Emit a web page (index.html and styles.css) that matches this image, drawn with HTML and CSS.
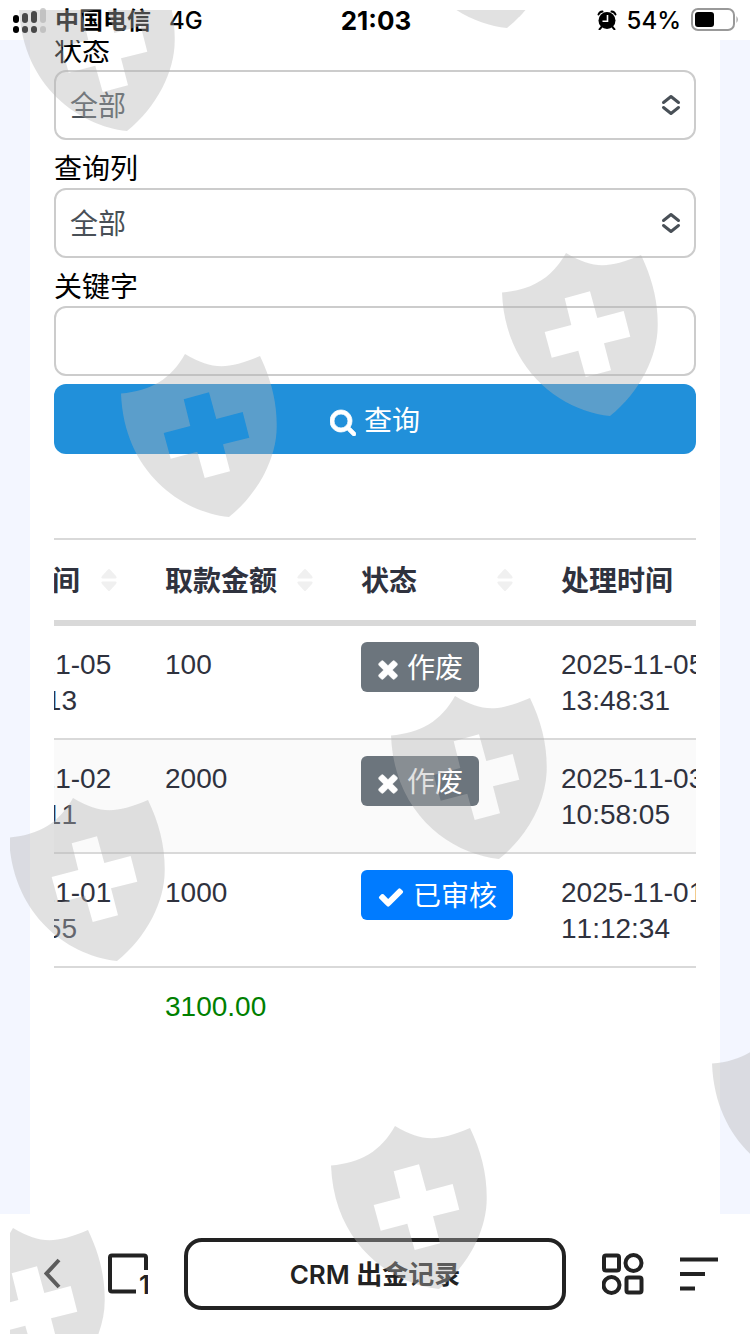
FILE: index.html
```html
<!DOCTYPE html>
<html lang="zh-CN">
<head>
    <meta charset="UTF-8">
    <meta name="viewport" content="width=device-width, initial-scale=1.0">
    <title>CRM 出金记录</title>
    <link rel="stylesheet" href="styles.css">
</head>
<body>
    <!-- shared icons -->
    <svg class="sprite" aria-hidden="true">
        <symbol id="icon-times" viewBox="192 0 1408 1792">
            <path d="M1490 1322q0 40-28 68l-136 136q-28 28-68 28t-68-28l-294-294-294 294q-28 28-68 28t-68-28l-136-136q-28-28-28-68t28-68l294-294-294-294q-28-28-28-68t28-68l136-136q28-28 68-28t68 28l294 294 294-294q28-28 68-28t68 28l136 136q28 28 28 68t-28 68l-294 294 294 294q28 28 28 68z" stroke="#fff" stroke-width="50"/>
        </symbol>
        <symbol id="icon-sort" viewBox="0 0 16 22">
            <path d="M7 .6Q8 -.4 9 .6L15 7Q16.500 9.500 14.500 9.500H1.500Q-.5 9.500 1 7zM7 21.400Q8 22.400 9 21.400L15 15Q16.500 12.500 14.500 12.500H1.500Q-.5 12.500 1 15z"/>
        </symbol>
        <symbol id="icon-updown" viewBox="0 0 20 22">
            <path d="M2.500 8.500L10 2.500L17.500 8.500M2.500 13.500L10 19.500L17.500 13.500" fill="none" stroke="currentColor" stroke-width="3" stroke-linecap="round" stroke-linejoin="round"/>
        </symbol>
        <symbol id="shield" viewBox="0 0 156 164">
            <path fill-rule="evenodd" d="M0 39.500C30 37 50 25 64 0C92 16 105 16 139 2C150 25 156 48 155.700 72C156 103 138 139 108 163C60 158 3 118 0 39.500zM62.700 45.300L69.300 72L42.700 79L49.700 104.700L76.300 97.700L83.700 124L109 117.300L102 90.300L128.300 83.700L121.700 58L95.300 65L88 38.300z"/>
        </symbol>
    </svg>

    <header class="status-bar">
        <div class="status-left">
            <svg class="signal" width="33" height="25" viewBox="0 0 33 25">
                <rect x="0" y="7" width="6" height="8" rx="3"/>
                <rect x="9" y="5" width="6" height="10" rx="3"/>
                <rect x="18" y="3" width="6" height="12" rx="3"/>
                <rect x="27" y="0" width="6" height="15" rx="3" opacity=".2"/>
                <rect x="0" y="18" width="6" height="7" rx="3"/>
                <rect x="9" y="18" width="6" height="7" rx="3"/>
                <rect x="18" y="18" width="6" height="7" rx="3"/>
                <rect x="27" y="18" width="6" height="7" rx="3" opacity=".2"/>
            </svg>
            <span class="carrier">中国电信</span>
            <span class="network">4G</span>
        </div>
        <span class="clock">21:03</span>
        <div class="status-right">
            <svg width="20" height="20" viewBox="0 0 20 20">
                <circle cx="10" cy="10.500" r="8.500"/>
                <path d="M1.500 4.500Q2.500 1.800 5.500 1.500M14.500 1.500Q17.500 1.800 18.500 4.500M4.500 17L2.500 19.300M15.500 17L17.500 19.300" fill="none" stroke="#000" stroke-width="2" stroke-linecap="round"/>
                <path d="M10.500 5V11.300H5.500" fill="none" stroke="#fff" stroke-width="1.600"/>
            </svg>
            <span class="percent">54%</span>
            <svg width="48" height="24" viewBox="0 0 48 24">
                <rect x="1" y="1" width="42" height="21" rx="6" fill="none" stroke="#999" stroke-width="2"/>
                <rect x="4" y="4" width="19" height="15" rx="3"/>
                <path d="M45.500 8Q48 11.500 45.500 15z" fill="#999"/>
            </svg>
        </div>
    </header>

    <main class="page">
        <div class="card">
            <form class="search-form">
                <label for="status">状态</label>
                <div class="select-box">
                    <select id="status"><option>全部</option><option>作废</option><option>已审核</option></select>
                    <svg class="select-arrow"><use href="#icon-updown"/></svg>
                </div>
                <label for="column">查询列</label>
                <div class="select-box">
                    <select id="column"><option>全部</option></select>
                    <svg class="select-arrow"><use href="#icon-updown"/></svg>
                </div>
                <label for="keyword">关键字</label>
                <input type="text" id="keyword">
                <button type="button" class="btn-search">
                    <svg width="26" height="34" viewBox="64 -384 1664 2176"><path stroke="#fff" stroke-width="50" d="M1216 832q0-185-131.500-316.500t-316.500-131.500-316.500 131.500-131.500 316.500 131.500 316.500 316.500 131.500 316.500-131.500 131.500-316.500zm512 832q0 52-38 90t-90 38q-54 0-90-38l-343-342q-179 124-399 124-143 0-273.500-55.500t-225-150-150-225-55.500-273.500 55.500-273.500 150-225 225-150 273.500-55.500 273.500 55.500 225 150 150 225 55.500 273.500q0 220-124 399l343 343q37 37 37 90z"/></svg>
                    查询
                </button>
            </form>

            <div class="table-wrap">
                <table class="records">
                    <colgroup>
                        <col class="col-apply"><col class="col-amount"><col class="col-status"><col class="col-handle">
                    </colgroup>
                    <thead>
                        <tr>
                            <th><div class="th-inner">申请时间<svg class="sort"><use href="#icon-sort"/></svg></div></th>
                            <th><div class="th-inner">取款金额<svg class="sort"><use href="#icon-sort"/></svg></div></th>
                            <th><div class="th-inner">状态<svg class="sort"><use href="#icon-sort"/></svg></div></th>
                            <th><div class="th-inner">处理时间<svg class="sort"><use href="#icon-sort"/></svg></div></th>
                        </tr>
                    </thead>
                    <tbody>
                        <tr>
                            <td>2025-11-05<br>13:20:13</td>
                            <td>100</td>
                            <td class="state"><span class="badge"><svg width="22" height="28"><use href="#icon-times"/></svg>作废</span></td>
                            <td>2025-11-05<br>13:48:31</td>
                        </tr>
                        <tr>
                            <td>2025-11-02<br>10:20:11</td>
                            <td>2000</td>
                            <td class="state"><span class="badge"><svg width="22" height="28"><use href="#icon-times"/></svg>作废</span></td>
                            <td>2025-11-03<br>10:58:05</td>
                        </tr>
                        <tr>
                            <td>2025-11-01<br>10:20:55</td>
                            <td>1000</td>
                            <td class="state"><span class="badge badge-done"><svg width="28" height="28" viewBox="0 0 1792 1792"><path d="M1671 566q0 40-28 68l-724 724-136 136q-28 28-68 28t-68-28l-136-136-362-362q-28-28-28-68t28-68l136-136q28-28 68-28t68 28l294 295 656-657q28-28 68-28t68 28l136 136q28 28 28 68z"/></svg>已审核</span></td>
                            <td>2025-11-01<br>11:12:34</td>
                        </tr>
                    </tbody>
                    <tfoot>
                        <tr>
                            <td></td>
                            <td class="total">3100.00</td>
                            <td></td>
                            <td></td>
                        </tr>
                    </tfoot>
                </table>
            </div>
        </div>
    </main>

    <nav class="toolbar">
        <button type="button" aria-label="返回">
            <svg width="28" height="42" viewBox="0 0 28 42"><path d="M15 7L2.500 20.500L15 34" fill="none" stroke="#222" stroke-width="4"/></svg>
        </button>
        <button type="button" aria-label="标签页">
            <svg width="40" height="42" viewBox="0 0 40 42">
                <path d="M28 38.500H4Q2 38.500 2 36.500V4.500Q2 2.500 4 2.500H36Q38 2.500 38 4.500V17" fill="none" stroke="#222" stroke-width="4"/>
                <text class="tab-count" x="31" y="41">1</text>
            </svg>
        </button>
        <button type="button" class="address">CRM 出金记录</button>
        <button type="button" aria-label="应用">
            <svg width="42" height="42" viewBox="0 0 42 42">
                <g fill="none" stroke="#222" stroke-width="4">
                    <rect x="2" y="2.500" width="15" height="15" rx="2"/>
                    <circle cx="31.500" cy="10" r="8"/>
                    <circle cx="9.500" cy="32" r="8"/>
                    <rect x="24.500" y="24.500" width="15" height="15" rx="2"/>
                </g>
            </svg>
        </button>
        <button type="button" aria-label="菜单">
            <svg width="38" height="42" viewBox="0 0 38 42"><path d="M0 6.500H38M0 21H25M0 35.500H15" fill="none" stroke="#222" stroke-width="4"/></svg>
        </button>
    </nav>

    <!-- shield watermark over the whole screen -->
    <svg class="watermark" aria-hidden="true">
        <g fill="#b3b3b3" fill-opacity=".4">
            <use href="#shield" x="9" y="-42" width="156" height="164"/>
            <use href="#shield" x="389" y="-145" width="156" height="164"/>
            <use href="#shield" x="492" y="243" width="156" height="164"/>
            <use href="#shield" x="111" y="344" width="156" height="164"/>
            <use href="#shield" x="381" y="686" width="156" height="164"/>
            <use href="#shield" x="-1" y="788" width="156" height="164"/>
            <use href="#shield" x="702" y="1014" width="156" height="164"/>
            <use href="#shield" x="321" y="1116" width="156" height="164"/>
            <use href="#shield" x="-61" y="1218" width="156" height="164"/>
        </g>
    </svg>
</body>
</html>
```
FILE: styles.css
```css
* {
    box-sizing: border-box;
}

body {
    margin: 0;
    height: 100vh;
    display: flex;
    flex-direction: column;
    overflow: hidden;
    background-color: #fff;
    font-family: "Liberation Sans", "Noto Sans CJK SC", sans-serif;
    font-size: 28px;
    font-kerning: none;
    color: #2f323e;
}

button,
input,
select {
    font: inherit;
}

svg {
    display: block;
    flex: none;
}

.sprite {
    position: absolute;
    width: 0;
    height: 0;
}

/* status bar */
.status-bar {
    display: grid;
    grid-template-columns: 1fr auto 1fr;
    align-items: center;
    height: 40px;
    padding: 0 11px 0 13px;
    font-family: Inter, "Noto Sans CJK SC", sans-serif;
    font-size: 24px;
    font-weight: 500;
    line-height: 38px;
    color: #000;
    background-color: #fff;
    z-index: 1;
}

.status-bar span {
    padding-top: 2px;
}

.status-left,
.status-right {
    display: flex;
    align-items: center;
}

.status-right {
    justify-content: flex-end;
    gap: 10px;
}

.carrier {
    margin: 0 18px 0 9px;
    font-weight: 600;
}

.clock {
    font-size: 26px;
    font-weight: 700;
}

/* page */
.page {
    flex: 1;
    min-height: 0;
    overflow: hidden;
    padding: 0 30px;
    background-color: #f3f6ff;
}

.card {
    display: flow-root;
    min-height: 100%;
    padding: 0 24px;
    background-color: #fff;
}

.search-form {
    display: flex;
    flex-direction: column;
    margin-top: -10px;
    padding-bottom: 84px;
}

.search-form label {
    padding-top: 4px;
    line-height: 36px;
    color: #000;
}

.select-box {
    position: relative;
}

.search-form select,
.search-form input {
    display: block;
    width: 100%;
    height: 70px;
    margin-bottom: 8px;
    padding: 2px 14px 0;
    border: 2px solid #ccc;
    border-radius: 12px;
    background-color: #fff;
    color: #495057;
    appearance: none;
}

.select-arrow {
    position: absolute;
    top: 24px;
    right: 15px;
    width: 20px;
    height: 22px;
    color: #495057;
    pointer-events: none;
}

.btn-search {
    display: flex;
    justify-content: center;
    align-items: center;
    gap: 8px;
    height: 70px;
    border: none;
    border-radius: 12px;
    background-color: #2190da;
    color: #fff;
    fill: #fff;
    cursor: pointer;
}

/* records table, scrolled sideways */
.table-wrap {
    overflow: hidden;
}

.records {
    width: 793px;
    margin-left: -110px;
    table-layout: fixed;
    border-collapse: separate;
    border-spacing: 0;
    line-height: 36px;
}

.col-apply {
    width: 197px;
}

.col-amount {
    width: 196px;
}

.col-status,
.col-handle {
    width: 200px;
}

.records th {
    height: 88px;
    padding: 4px 24px 0;
    border-top: 2px solid #d9d9d9;
    border-bottom: 6px solid #d9d9d9;
    font-weight: 700;
    text-align: left;
}

.th-inner {
    display: flex;
    justify-content: space-between;
    align-items: center;
}

.sort {
    width: 16px;
    height: 22px;
    margin-bottom: 4px;
    fill: #f0f0f0;
}

.records td {
    height: 114px;
    padding: 21px 24px 0;
    vertical-align: top;
}

.records tbody td {
    border-bottom: 2px solid #d9d9d9;
}

.records tbody tr:nth-child(even) {
    background-color: #fafafa;
}

.records .state {
    padding-top: 16px;
}

.records .total {
    color: #008000;
}

.badge {
    display: inline-flex;
    align-items: center;
    gap: 8px;
    height: 50px;
    padding: 3px 16px 0;
    border-radius: 6px;
    background-color: #6c757d;
    color: #fff;
    fill: #fff;
    vertical-align: top;
}

.badge-done {
    background-color: #007bff;
}

/* browser toolbar */
.toolbar {
    display: flex;
    align-items: center;
    gap: 36px;
    height: 120px;
    padding: 0 32px 0 44px;
    background-color: #fff;
}

.toolbar button {
    padding: 0;
    border: none;
    background: none;
    cursor: pointer;
}

.toolbar .address {
    flex: 1;
    height: 72px;
    padding-bottom: 4px;
    border: 4px solid #222;
    border-radius: 18px;
    font-family: Inter, "Noto Sans CJK SC", sans-serif;
    font-size: 26px;
    font-weight: 600;
    color: #222;
}

.tab-count {
    font-family: Inter, sans-serif;
    font-size: 26px;
    font-weight: 600;
    fill: #222;
}

.watermark {
    position: fixed;
    top: 10px;
    left: 10px;
    width: calc(100% - 10px);
    height: calc(100% - 10px);
    overflow: hidden;
    pointer-events: none;
    z-index: 2;
}
```
